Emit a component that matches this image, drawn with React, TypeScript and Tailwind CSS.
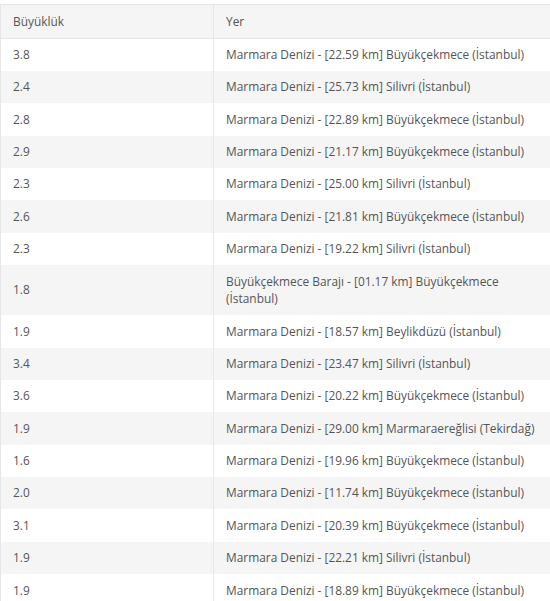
import React from "react";

const rows: [string, string][] = [
  ["3.8", "Marmara Denizi - [22.59 km] Büyükçekmece (İstanbul)"],
  ["2.4", "Marmara Denizi - [25.73 km] Silivri (İstanbul)"],
  ["2.8", "Marmara Denizi - [22.89 km] Büyükçekmece (İstanbul)"],
  ["2.9", "Marmara Denizi - [21.17 km] Büyükçekmece (İstanbul)"],
  ["2.3", "Marmara Denizi - [25.00 km] Silivri (İstanbul)"],
  ["2.6", "Marmara Denizi - [21.81 km] Büyükçekmece (İstanbul)"],
  ["2.3", "Marmara Denizi - [19.22 km] Silivri (İstanbul)"],
  ["1.8", "Büyükçekmece Barajı - [01.17 km] Büyükçekmece (İstanbul)"],
  ["1.9", "Marmara Denizi - [18.57 km] Beylikdüzü (İstanbul)"],
  ["3.4", "Marmara Denizi - [23.47 km] Silivri (İstanbul)"],
  ["3.6", "Marmara Denizi - [20.22 km] Büyükçekmece (İstanbul)"],
  ["1.9", "Marmara Denizi - [29.00 km] Marmaraereğlisi (Tekirdağ)"],
  ["1.6", "Marmara Denizi - [19.96 km] Büyükçekmece (İstanbul)"],
  ["2.0", "Marmara Denizi - [11.74 km] Büyükçekmece (İstanbul)"],
  ["3.1", "Marmara Denizi - [20.39 km] Büyükçekmece (İstanbul)"],
  ["1.9", "Marmara Denizi - [22.21 km] Silivri (İstanbul)"],
  ["1.9", "Marmara Denizi - [18.89 km] Büyükçekmece (İstanbul)"],
];

export default function App() {
  return (
    <div
      className="w-[550px] h-[601px] overflow-hidden bg-white pt-[4px] text-[11.9px] text-[#555555]"
      style={{ fontFamily: '"Open Sans", "Noto Sans", sans-serif' }}
    >
      <table className="w-[550px] border-collapse border-l border-t border-[#e6e6e6] table-fixed">
        <colgroup>
          <col className="w-[213px]" />
          <col />
        </colgroup>
        <thead>
          <tr className="bg-[#f5f5f5] border-b border-[#e6e6e6]">
            <th className="text-left font-normal pl-[12px] pr-[12px] pt-[8px] pb-[7px] leading-[17.6px] border-r border-[#e6e6e6]">
              Büyüklük
            </th>
            <th className="text-left font-normal pl-[12px] pr-[4px] pt-[8px] pb-[7px] leading-[17.6px]">
              Yer
            </th>
          </tr>
        </thead>
        <tbody>
          {rows.map(([m, p], i) => (
            <tr key={i} className={i % 2 === 1 ? "bg-[#f5f5f5]" : "bg-white"}>
              <td className="align-middle pl-[12px] pr-[12px] py-[7.4px] leading-[17.6px] border-r border-[#e6e6e6]">
                {m}
              </td>
              <td className="align-middle pl-[12px] pr-[4px] py-[7.4px] leading-[17.6px]">{p}</td>
            </tr>
          ))}
        </tbody>
      </table>
    </div>
  );
}
